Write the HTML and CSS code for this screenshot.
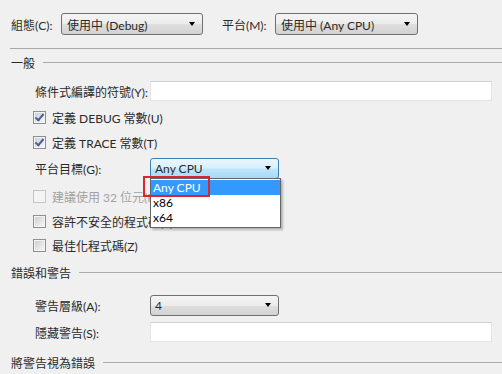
FILE: index.html
```html
<!DOCTYPE html>
<html lang="zh-Hant">
<head>
    <meta charset="UTF-8">
    <meta name="viewport" content="width=device-width, initial-scale=1.0">
    <title>建置</title>
    <link rel="stylesheet" href="styles.css">
</head>
<body>

<div class="page">
    <div class="topbar">
        <span class="top-label">組態(C):</span>
        <div class="combo combo-config"><span>使用中 (Debug)</span><i class="arrow"></i></div>
        <span class="top-label top-label-platform">平台(M):</span>
        <div class="combo combo-platform"><span>使用中 (Any CPU)</span><i class="arrow"></i></div>
    </div>
    <div class="rule"></div>

    <div class="section-title first"><span>一般</span></div>

    <div class="row row-symbols">
        <span class="field-label">條件式編譯的符號(Y):</span>
        <div class="textbox"></div>
    </div>
    <div class="check-row row-debug">
        <span class="checkbox checked"></span><span>定義 DEBUG 常數(U)</span>
    </div>
    <div class="check-row row-trace">
        <span class="checkbox checked"></span><span>定義 TRACE 常數(T)</span>
    </div>
    <div class="row row-target">
        <span class="field-label">平台目標(G):</span>
        <div class="combo combo-small open">
            <span>Any CPU</span><i class="arrow"></i>
            <ul class="dropdown">
                <li class="selected">Any CPU</li>
                <li>x86</li>
                <li>x64</li>
            </ul>
            <div class="highlight-box"></div>
        </div>
    </div>
    <div class="check-row row-32bit disabled">
        <span class="checkbox"></span><span>建議使用 32 位元(P)</span>
    </div>
    <div class="check-row row-unsafe">
        <span class="checkbox"></span><span>容許不安全的程式碼(F)</span>
    </div>
    <div class="check-row row-optimize">
        <span class="checkbox"></span><span>最佳化程式碼(Z)</span>
    </div>

    <div class="section-title errors"><span>錯誤和警告</span></div>

    <div class="row row-level">
        <span class="field-label">警告層級(A):</span>
        <div class="combo combo-small"><span>4</span><i class="arrow"></i></div>
    </div>
    <div class="row row-suppress">
        <span class="field-label">隱藏警告(S):</span>
        <div class="textbox"></div>
    </div>

    <div class="section-title as-errors"><span>將警告視為錯誤</span></div>
</div>

</body>
</html>
```

FILE: styles.css
```css
body {
    margin: 0;
    background-color: #f0f0f0;
    font-family: Lato, "Noto Sans CJK TC", sans-serif;
    font-size: 12px;
    color: #2a2a2a;
    overflow: hidden;
}
.page {
    display: flex;
    flex-direction: column;
    width: 502px;
}
.topbar {
    display: flex;
    align-items: center;
    height: 22px;
    margin-top: 13px;
    padding-left: 11px;
}
.top-label {
    width: 50px;
}
.top-label-platform {
    margin-left: 19px;
    width: 53px;
}
.combo {
    position: relative;
    display: flex;
    align-items: center;
    box-sizing: border-box;
    height: 22px;
    padding: 0 6px 0 5px;
    border: 1px solid #707070;
    border-radius: 3px;
    background: linear-gradient(#f4f4f4 0%, #ececec 50%, #dfdfdf 51%, #d2d2d2 100%);
}
.combo span {
    flex: 1;
}
.combo-config {
    width: 142px;
}
.combo-platform {
    width: 143px;
}
.combo-small {
    width: 129px;
    height: 21px;
    padding-left: 4px;
}
.combo.open {
    border-color: #3c7fb1;
    background: linear-gradient(#eaf6fd 0%, #d9f0fc 48%, #bee6fd 52%, #a7d9f5 100%);
}
.arrow {
    width: 0;
    height: 0;
    border-left: 3px solid transparent;
    border-right: 3px solid transparent;
    border-top: 4px solid #000;
    margin-right: 1px;
}
.rule {
    margin: 13px 0 0 10px;
    height: 1px;
    background-color: #a7a7a7;
}
.section-title {
    display: flex;
    align-items: center;
    height: 14px;
    padding-left: 11px;
}
.section-title::after {
    content: "";
    flex: 1;
    height: 1px;
    margin-left: 8px;
    background-color: #ababab;
}
.section-title.first {
    margin-top: 6px;
}
.section-title.errors {
    margin-top: 10px;
}
.section-title.as-errors {
    margin-top: 13px;
}
.row {
    display: flex;
    align-items: center;
    height: 20px;
    padding-left: 35px;
}
.field-label {
    width: 115px;
}
.textbox {
    box-sizing: border-box;
    width: 342px;
    height: 20px;
    background-color: #fff;
    border: 1px solid #e2e3ea;
    border-top-color: #d0d0d0;
}
.check-row {
    display: flex;
    align-items: center;
    height: 20px;
    padding-left: 33px;
}
.checkbox {
    box-sizing: border-box;
    position: relative;
    width: 13px;
    height: 13px;
    margin-right: 6px;
    border: 1px solid #8e8f8f;
    background: #f4f4f4;
}
.checkbox::before {
    content: "";
    position: absolute;
    left: 1px;
    top: 1px;
    right: 1px;
    bottom: 1px;
    background: linear-gradient(135deg, #cbcfd5, #f6f6f6);
}
.checkbox.checked::after {
    content: "";
    position: absolute;
    left: 3px;
    top: 0px;
    width: 3px;
    height: 7px;
    border-right: 2px solid #4a5f97;
    border-bottom: 2px solid #4a5f97;
    transform: rotate(40deg);
}
.disabled {
    color: #a2a2a2;
}
.disabled .checkbox {
    border-color: #c5c5c5;
}
.disabled .checkbox::before {
    background: #f4f4f4;
}
.row-symbols {
    margin-top: 12px;
}
.row-debug {
    margin-top: 6px;
}
.row-trace {
    margin-top: 5px;
}
.row-target {
    margin-top: 6px;
}
.row-32bit {
    margin-top: 8px;
}
.row-unsafe {
    margin-top: 5px;
}
.row-optimize {
    margin-top: 4px;
}
.row-level {
    margin-top: 16px;
}
.row-suppress {
    margin-top: 7px;
}
.dropdown {
    position: absolute;
    left: -1px;
    top: 19px;
    width: 129px;
    margin: 0;
    padding: 1px 0 2px;
    list-style: none;
    background-color: #fff;
    border: 1px solid #646464;
    box-shadow: 2px 2px 2px rgba(0, 0, 0, 0.25);
    z-index: 2;
}
.dropdown li {
    height: 15px;
    line-height: 15px;
    padding-left: 2px;
    color: #000;
}
.dropdown li.selected {
    background-color: #3399ff;
    color: #fff;
}
.highlight-box {
    position: absolute;
    left: -8px;
    top: 17px;
    width: 63px;
    height: 17px;
    border: 2px solid #d9262e;
    z-index: 3;
}
```
